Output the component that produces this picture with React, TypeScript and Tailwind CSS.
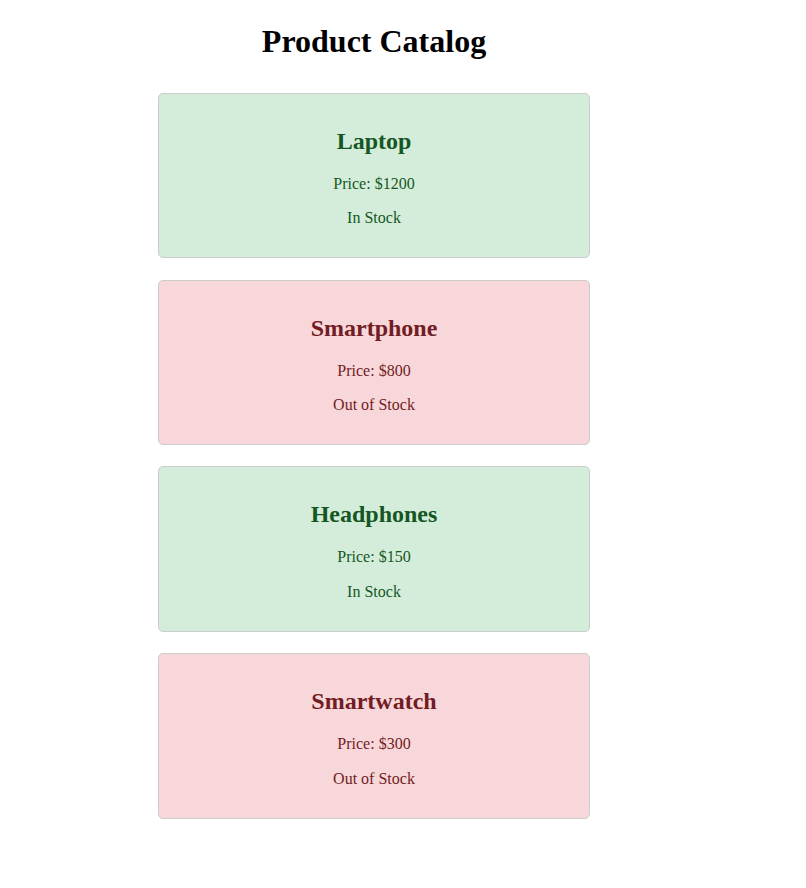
const products = [
  { name: "Laptop", price: 1200, inStock: true },
  { name: "Smartphone", price: 800, inStock: false },
  { name: "Headphones", price: 150, inStock: true },
  { name: "Smartwatch", price: 300, inStock: false },
];

export default function App() {
  return (
    <div className="min-h-screen bg-white font-['Liberation_Serif',_'Times_New_Roman',_serif]">
      <div className="ml-[158px] w-[432px] pt-[23px]">
        <h1 className="text-center text-[32px] font-bold leading-[36.8px] text-black mb-[33px]">
          Product Catalog
        </h1>
        {products.map((p) => (
          <div
            key={p.name}
            className={`mb-[21.2px] rounded-[5px] border border-[#ccc] px-[15px] pt-[15px] pb-[14px] text-center ${
              p.inStock ? "bg-[#d4edda] text-[#155724]" : "bg-[#f8d7da] text-[#721c24]"
            }`}
          >
            <h2 className="mt-[19px] mb-[19.5px] text-[24px] font-bold leading-[27.6px]">{p.name}</h2>
            <p className="my-4 text-[16px] leading-[18.4px]">Price: ${p.price}</p>
            <p className="mt-4 mb-[15.7px] text-[16px] leading-[18.4px]">
              {p.inStock ? "In Stock" : "Out of Stock"}
            </p>
          </div>
        ))}
      </div>
    </div>
  );
}
